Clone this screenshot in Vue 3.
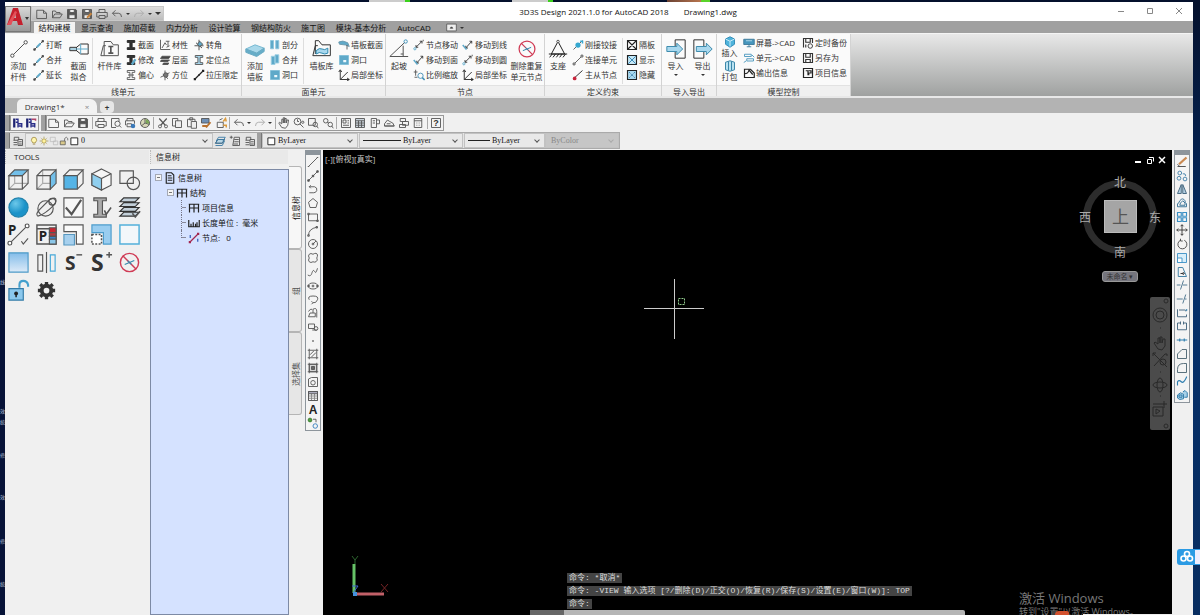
<script setup>
import { h } from 'vue'

const B = '#5fa9c9'
const L = '#a9d8ee'
const ibeam = '<path d="M3 2h10v2.5H9.500v7H13V14H3v-2.500h3.500v-7H3z" fill="#333" stroke="#222"/>'

const small = {
  new: '<path d="M1 3h9l4 4v7H1zM10 3v4h4"/>',
  open: '<path d="M2 13V4h4l1 2h5v2M2 13l3-5h10l-3 5z"/>',
  save: '<path d="M2 2h11l1 1v11H2z" fill="#555"/><path d="M5 2h6v4H5zM4 9h8v5H4z" fill="#eee"/>',
  saveas: '<path d="M2 2h12v12H2z" fill="#666"/><path d="M5 2h6v4H5zM4 9h8v5H4z" fill="#eee"/><path d="M8 13l6-6" stroke="#c8843c" stroke-width="2.500"/>',
  print: '<path d="M4 6V2h8v4M4 12H1V6h14v6h-3M4 10h8v4H4z"/>',
  undo: '<path d="M6 3L2 7l4 4M2 7h8q4 0 4 5"/>',
  redo: '<g stroke="#aaa"><path d="M10 3l4 4-4 4M14 7H6q-4 0-4 5"/></g>',
  preview: '<path d="M8 14H2V2h10v4"/><circle cx="10" cy="9" r="3.500"/><path d="M12.500 11.500L15 14"/>',
  plot: '<path d="M4 5V2h8v3M2 11V5h12v4M4 9h6v4H4z"/><circle cx="12" cy="12" r="3" fill="#3a78b8" stroke="none"/>',
  globe: '<circle cx="8" cy="8" r="6" fill="#d8d8b8"/><path d="M8 2v6l6 2M8 8l-5 4"/><path d="M9 3q5 1 4.500 6L9 8z" fill="#79a657" stroke="none"/>',
  cut: '<path d="M3 2l8 9M13 2L5 11" stroke-width="1.600"/><circle cx="4" cy="12.500" r="2"/><circle cx="12" cy="12.500" r="2"/>',
  copy: '<path d="M2 2h7v10H2z"/><path d="M6 5h8v9H6z" fill="#eee"/>',
  paste: '<path d="M2 3h10v10H2zM5 1h4v3H5z"/><path d="M7 6h7v9H7z" fill="#eee"/>',
  match: '<path d="M2 2h10v6H2z" fill="#6e8fb5"/><path d="M3 12h6M14 7l-6 7" stroke="#b8702c" stroke-width="2.500"/>',
  block: '<path d="M3 7h8v7H3zM6 4l4-2" /><path d="M11 6l3-4 1 4M11 11h4v3" stroke="#dc9b3c" stroke-width="2"/>',
  hand: '<path d="M5 14L1 8l1-1 3 2V3h2v5V1h2v7V2h2v6l1-4h2l-1 7-3 4z"/>',
  zoom: '<circle cx="6" cy="6" r="4.500"/><path d="M9 9l5 5M6 3v3h2"/><circle cx="13" cy="7" r="1.500"/>',
  zoomwin: '<path d="M2 2h9v9H2z"/><circle cx="11" cy="10" r="3"/><path d="M13 12l2 3"/>',
  zoomprev: '<circle cx="5" cy="5" r="3"/><circle cx="11" cy="10" r="3"/><path d="M13 12l2 3M7 7l2 1"/>',
  props: '<path d="M2 2h12v12H2zM4 4h4v4H4zM10 5h2M10 8h2M4 11h8"/>',
  grid: '<path d="M2 2h12v12H2z" fill="#ccd5dd"/><path d="M2 5h12M2 8h12M2 11h12M6 5v9M10 5v9"/>',
  palette: '<path d="M3 2h7v12H3zM10 4h4v5h-4M5 5h3M5 8h3"/>',
  sheet: '<path d="M2 12V9l4-5 3 2 4 2 2 4zM5 9h5M2 12h13"/>',
  sets: '<path d="M3 2h7v4H3zM6 6h8v5H6zM2 10h8v4H2z"/>',
  calc: '<path d="M3 2h10v12H3zM3 5h10M6 8h1M9 8h1M6 11h1M9 11h1"/>',
  help: '<path d="M2 2h12v12H2z"/><text x="8" y="12.500" font-size="12" font-weight="bold" font-family="Liberation Sans" text-anchor="middle" fill="#333" stroke="none">?</text>',
  ra: '<path d="M3 2v12" stroke="#1d2270" stroke-width="3"/><path d="M5 3h3v4H5M8 14V9h5v5M9 12h4" stroke="#2a2e88" stroke-width="1.800"/>',
  rb: '<path d="M3 2v12" stroke="#1d2270" stroke-width="3"/><path d="M5 3h3v4H5M8 14V9h5v5M9 12h4" stroke="#2a2e88" stroke-width="1.800"/><path d="M9 3h5v2" stroke="#b04468" stroke-width="2"/>',
  layers: '<path d="M2 7h6M2 10h5M2 13h5M3 7V3h6v3"/><path d="M8 6h6v8H8zM9 9h4M9 12h4" stroke="#555"/>',
  layers2: '<path d="M2 11l3-5h9l-3 5z" fill="#b8d6e6"/><path d="M2 11l3-5h9l-3 5zM3 8l3-5h9l-3 5M2 14h9l3-6" stroke="#3b7aa5"/>',
  layers3: '<path d="M7 3h7v11H5zM7 6h6M7 9h6M6 12h6M1 3h4M3 1v4"/>',
  bulb: '<path d="M6 11Q2 7 5 3q3-2 6 0 3 4-1 8zM6 13h4" fill="#fff6ae" stroke="#99833c"/>',
  sun: '<circle cx="8" cy="8" r="3.500" fill="#fff3a0" stroke="#a08d3c"/><path d="M8 1v2M8 13v2M1 8h2M13 8h2M3 3l1 1M12 12l1 1M3 13l1-1M12 4l1-1" stroke="#a08d3c"/>',
  vp: '<path d="M2 2h8v7H2zM7 8h7v6H7z" stroke="#bbb"/>',
  unlock: '<path d="M2 8h8v6H2z" fill="#d8c88a"/><path d="M9 8V4q3-4 5 0v3"/>',
  box: '<path d="M3 3h11v11H3z" fill="#fff" stroke="#222" stroke-width="1.500"/>',
  seg: '<path d="M3 13L13 3"/><path d="M1.500 12h2.500v2.500H1.500zM12 1.500h2.500V4H12z" fill="#fff"/>',
  segb: `<path d="M2 14L13 3" stroke="#444"/><path d="M5 11l5-5" stroke="${B}" stroke-width="2.500"/><path d="M12 2h2v2h-2zM1 13h2v2H1z" fill="#333"/>`,
  segk: '<path d="M2 14L14 2" stroke="#222" stroke-width="1.600"/><path d="M1 12h3v3H1zM12 1h3v3h-3zM7 7h2v2H7z" fill="#222" stroke="none"/>',
  segr: '<path d="M3 12L14 2" stroke="#222"/><circle cx="3.500" cy="12.500" r="2.500" fill="#c8243c" stroke="none"/>',
  beam: ibeam,
  beamb: ibeam + `<path d="M9 14l5-7" stroke="${B}" stroke-width="3"/>`,
  beamo: '<path d="M3 2h10v2.500H9.500v7H13V14H3v-2.500h3.500v-7H3z"/><path d="M4 8h8"/>',
  beaml: `<path d="M3 2h10v2.500H9.500v7H13V14H3v-2.500h3.500v-7H3z" fill="${L}"/>`,
  mat: '<path d="M2 1v13h13M4 12L8 5l2 3M9 3h5M12 3v7M10 11l4-2"/>',
  floor: '<path d="M4 3h11l-2 3H2zM3 8h11l-2 2H2zM6 12h7l-1 2H5z" fill="#444"/>',
  rot: `<path d="M8 1v14M2 9h12M4 5l8 7" stroke="#444"/><path d="M9 3l4 4-4 3-3-3z" fill="${B}"/>`,
  dir: '<path d="M8 2v13M2 11l12-6M5 7l7 6" /><circle cx="9" cy="8" r="3" fill="#777"/>',
  split: `<path d="M2 2h4v11H2zM9 2h4v11H9z" fill="${B}" stroke="#8dc5dc"/>`,
  merge: `<path d="M3 3h5v11H3zM8 1h5v11H8z" fill="${B}" stroke="#9ccfe3"/>`,
  hole: `<path d="M2 2h12v12H2z" fill="${B}" stroke="#82bed8"/><path d="M7 8h4v3H7z" fill="#eef8fc" stroke="none"/>`,
  slab: `<path d="M1 4q5-3 12 1l2 5-5-2-8-1z" fill="${B}" stroke="#6b97ab"/><path d="M12 8v6"/>`,
  axes: '<path d="M3 2v12h12M3 14L13 4M1 4l2-3 2 3M12 12l3 2-3 2" stroke="#222"/>',
  move: '<path d="M4 11L12 3M4 8v3h3M9 3h3v3" stroke="#333"/><circle cx="2.500" cy="13" r="1.500" stroke="#5fa9c9"/><path d="M13 2h1" stroke="#222" stroke-width="2"/>',
  moveb: '<path d="M5 12l8-9M5 9v3h3M10 3h3v3" stroke="#333"/><path d="M1 8l5 6" stroke="#5fa9c9" stroke-width="2"/>',
  scale: '<path d="M1 4h5M3.500 1v8M2 11h4"/><circle cx="10" cy="9" r="3.500" stroke="#438fb5"/><path d="M12.500 11.500l3 3" stroke="#438fb5" stroke-width="2"/>',
  hinge: `<path d="M2 14L14 2"/><circle cx="8" cy="8" r="3.500" fill="#35a8d0" stroke="none"/><path d="M11 3h3v3" stroke="#35a8d0" stroke-width="2"/>`,
  xboxw: '<path d="M2 2h12v12H2zM2 2l12 12M14 2L2 14" stroke="#222" stroke-width="1.500"/>',
  xboxb: `<path d="M2 2h12v12H2z" fill="#c5e8f7" stroke="#222" stroke-width="1.500"/><path d="M3 3l10 10M13 3L3 13" stroke="#2d7fb0"/>`,
  xboxd: `<path d="M2 2h12v12H2z" fill="${L}" stroke="#222" stroke-width="1.500"/><path d="M4 4l8 8M12 4l-8 8" stroke="#347ca7" stroke-dasharray="2 1"/>`,
  insert: `<path d="M2 4l6-3 6 3v7l-6 4-6-4z" fill="#4fb4dc" stroke="#2b88b4"/><path d="M2 4l6 3 6-3M8 7v7" stroke="#d5f0fa"/>`,
  pack: `<path d="M2 3l6-2 6 2v10l-6 2-6-2z" fill="#b9e1f0" stroke="#2b7ca0"/><path d="M6 2v12M10 2v12" stroke="#2b7ca0"/>`,
  screen: '<path d="M1 3h14v7H1z" fill="#4796bd" stroke="#3c7898"/><path d="M4 5h8" stroke="#b8ddeb"/><path d="M5 13h6M8 10v3" stroke="#3c7898"/>',
  unit: '<path d="M2 3h9v3H2zM5 9h9v3H5zM12 4l3 3M4 12l-3 2" stroke="#4796bd"/>',
  output: '<path d="M2 3h8l5 5v6H2zM2 9q5 0 6-5l5 6" stroke="#222" stroke-width="1.600"/>',
  disk: '<path d="M2 2h12v12H2zM5 2v5h6V2M5 14v-4h6v4" stroke="#333" stroke-width="1.500"/>',
  diskt: '<path d="M2 14V2h12v6M5 2v5h6V2M5 14v-4" stroke="#333" stroke-width="1.500"/><circle cx="11" cy="12" r="3" stroke="#333"/>',
  info: '<path d="M2 2h12v12H2zM5 5h3v6M9 5h3v3H9v3" stroke="#222" stroke-width="1.600"/>',
  doc: '<path d="M3 1h7l3 3v11H3zM5 5h5M5 8h6M5 11h6" stroke="#222" stroke-width="1.500"/>',
  frame: '<path d="M2 14V3h12v11M8 3v11M2 8h12M1 3h14" stroke="#222" stroke-width="1.600"/>',
  ruler: '<path d="M1 4v9h14V4M4 13V9M7 13V7M10 13V9M12 13V7" stroke="#222" stroke-width="1.600"/>',
  node: '<path d="M3 13L13 3" stroke="#a3264f" stroke-width="1.600"/><path d="M1 12h3v3H1zM12 1h3v3h-3z" fill="#a3264f" stroke="none"/><path d="M3 4v4M13 9v4" stroke="#335bb8" stroke-width="1.600"/>',
  line: '<path d="M2 14L14 2M1 14h2M13 2h2"/>',
  cline: '<path d="M2 14L14 2"/><path d="M1 13h2v2H1zM13 1h2v2h-2zM7 7h2v2H7z" fill="#555"/>',
  pline: '<path d="M3 5h7q4 1 3 5-1 3-4 3H3M5 3L3 5l2 2"/>',
  penta: '<path d="M8 2l6 5-2 7H4L2 7z"/>',
  rect: '<path d="M2 4h12v9H2zM1 3h2v2H1zM13 12h2v2h-2z"/>',
  arc: '<path d="M2 14q0-9 11-11M1 13h2v2H1zM12 2h2v2h-2z"/>',
  circle: '<circle cx="8" cy="8" r="6"/><path d="M8 8l4-4M7 7h2v2H7z"/>',
  cloud: '<path d="M8 3q5-3 6 1 0 2-1 4 2 3-1 5-2 1-4 0-3 2-5 0-2-2 0-5-2-3 0-5 2-2 5 0z"/>',
  spline: '<path d="M1 12q3 3 5-1c1-3 2-7 4-4s2 2 4-4"/>',
  ellipse: '<ellipse cx="8" cy="8" rx="6" ry="4"/><path d="M1 7h2v2H1zM13 7h2v2h-2zM7 7h2v2H7z"/>',
  earc: '<path d="M3 9Q0 4 8 4t6 5-6 4M6 11l2 2-2 2"/>',
  ins: '<path d="M4 8h7v5H2zM8 8V3q5-3 5 3v8M2 6q2-4 5-3"/>',
  mkb: '<path d="M2 4h8v6H2zM7 12h6"/><circle cx="12" cy="10" r="2.500"/>',
  dot: '<path d="M7 7h2v2H7z" fill="#555" stroke="none"/>',
  hatch: '<path d="M3 3h10v10H3zM1 3h2M13 3h2M3 1v2M13 1v2M1 13h2M13 13h2M3 13v2M13 13v2M4 9l5-5M6 12l6-6"/>',
  grad: '<path d="M3 3h10v10H3z" fill="#d5d5d5"/><path d="M6 6h4v4H6z" fill="#666"/><path d="M1 3h14M1 13h14M3 1v14M13 1v14"/>',
  region: '<path d="M2 4l4-2h8v12H2z"/><circle cx="8" cy="9" r="3"/>',
  table: '<path d="M2 2h12v12H2zM2 8h12M2 11h12M6 5v9M10 5v9" stroke="#888"/><path d="M2 2h12v12H2z"/><path d="M2 2h12v3H2z" fill="#aab"/>',
  text: '<text x="8" y="14" font-size="16" font-weight="bold" font-family="Liberation Sans" text-anchor="middle" fill="#222" stroke="none">A</text>',
  addsel: '<circle cx="4" cy="4" r="2.500" fill="#519e42" stroke="#387d2d"/><circle cx="11" cy="12" r="3" stroke="#347fbd"/><path d="M8 3h4v4" />',
  erase: '<path d="M4 11L14 2" stroke="#c98952" stroke-width="3"/><path d="M2 14h11M2 11l3 3" stroke="#444"/>',
  mcopy: '<g stroke="#3f7fa8"><circle cx="5" cy="4" r="2.500"/><circle cx="4" cy="11" r="2.500"/><circle cx="12" cy="12" r="2.500"/><path d="M9 5q4-1 4 3"/></g>',
  mirror: '<path d="M7 2v12H2zM9 2v12h5z" fill="#b5d0e2" stroke="#3a5f78"/>',
  offset: '<path d="M2 13h12V9q-2-1-2-4-3-5-7 0-2 5-3 4zM5 11h7V8L9 5 6 8z" stroke="#2f6b92"/>',
  array: '<path d="M2 2h5v5H2zM9 2h5v5H9zM2 9h5v5H2zM9 9h5v5H9z" stroke="#3a8fc4" stroke-width="1.500"/>',
  mv: '<path d="M8 1v14M1 8h14M6 3l2-2 2 2M6 13l2 2 2-2M3 6L1 8l2 2M13 6l2 2-2 2" stroke="#333"/>',
  rotate: '<path d="M6 3a6 6 0 1 0 5 0M6 1v3h3" stroke="#444"/>',
  scl: '<path d="M2 2h12v12H2z" fill="#d8eefa" stroke="#3a8fc4"/><path d="M2 8h6v6H2z" fill="#fff" stroke="#3a8fc4"/>',
  stretch: '<path d="M3 14V2h6l5 12z" stroke="#33779f"/><path d="M6 10h4M9 8l2 2-2 2" stroke="#222"/>',
  trim: '<path d="M1 8h5M9 8h6M10 2L6 14" stroke="#456f8a"/>',
  extend: '<path d="M1 8h8M13 2L9 14M12 8h2" stroke="#456f8a"/>',
  brk: '<path d="M12 5h2M4 4h8M2 3v10h12v-3" stroke="#3c5f78"/><path d="M13 3h2v2h-2z" fill="#2d7dae" stroke="none"/>',
  brk2: '<path d="M6 4H2v9h12V4h-4M6 2v4M10 2v4" stroke="#3c5f78"/>',
  join: '<path d="M1 8h14M5 6v4M11 6v4" stroke="#2d7dae" stroke-width="1.500"/>',
  chamfer: '<path d="M2 14V8l6-6h6v12z" stroke="#48626f"/>',
  fillet: '<path d="M2 14v-4q0-8 8-8h4v12z" stroke="#48626f"/>',
  blend: '<path d="M2 14V9q2-3 5 0t7-6V2" stroke="#2d7dae" stroke-width="1.500"/>',
  explode: '<path d="M2 8l4-3 4 2v6l-5 1-3-2zM9 4l3-2 3 3v6h-4M4 8h4v3H4z" fill="#a6d0e8" stroke="#2976a5"/>',
  toggle: '<path d="M1 3h14v10H1z" fill="#eee" stroke="#555"/><path d="M6 9l2-2 2 2z" fill="#333"/>'
}

const large = {
  node2: '<path d="M4 20L20 4"/><circle cx="4" cy="20" r="2" fill="#fff"/><circle cx="20" cy="4" r="2" fill="#fff"/>',
  fit: `<path d="M1 10h8v4H1zM9 10l5-4h9v12h-9l-5-4z" stroke="#333"/><path d="M14 6v12M1 12h22" stroke="${B}"/>`,
  lib: '<path d="M5 20V3h8l3 4h6v13H1L4 8h3"/><path d="M10 9h6M10 17h6M13 9v8" stroke-width="2"/>',
  slab2: '<path d="M1 12l11-5 11 4-9 6z" fill="#a9d8ea" stroke="#78b9d2"/><path d="M1 12v4l13 5 9-6v-4l-9 6z" fill="#66adc8" stroke="#6aaac3"/>',
  wall: `<path d="M4 18V2h4l4 5h10v13H1l3-12h3" stroke="#333"/><path d="M5 14q4-4 7-2t7-1v6q-4 2-7 0t-7 1z" fill="${L}" stroke="#308ab0"/>`,
  slope: '<path d="M1 21h22M1 21L19 4M17 8v13M14 18h3"/><circle cx="20" cy="3" r="2" stroke="#4796bd"/>',
  noentry: '<circle cx="12" cy="12" r="9.500" stroke="#d03b55" stroke-width="1.500"/><path d="M5 5l14 14" stroke="#d03b55" stroke-width="1.500"/><path d="M7 14l10-4M10 10l4 4" stroke="#3489ad"/>',
  support: '<path d="M12 3l8 15H4z" stroke="#222"/><path d="M1 18h22M2 22l3-4M6 22l3-4M10 22l3-4M14 22l3-4M18 22l3-4" stroke="#222"/><circle cx="12" cy="3" r="1.500" fill="#fff"/>',
  import: `<path d="M11 1h12v22H11V1" stroke="#333"/><path d="M1 9h12V5l7 7-7 7v-4H1z" fill="${L}" stroke="#3e8cae"/>`,
  export: `<path d="M13 1H1v22h12V1" stroke="#333"/><path d="M4 9h12V5l7 7-7 7v-4H4z" fill="${L}" stroke="#3e8cae"/>`,
  cubeTop: '<path d="M8 2v14h14M8 16l-6 6" stroke="#aaa"/><path d="M2 8l6-6h14l-6 6z" fill="#73c0ea"/><path d="M2 8h14v14H2zM22 2v14l-6 6"/>',
  cubeRight: '<path d="M8 2v14h14M8 16l-6 6" stroke="#aaa"/><path d="M22 2v14l-6 6V8z" fill="#73c0ea"/><path d="M2 8h14v14H2zM2 8l6-6h14"/>',
  cubeFront: '<path d="M2 8l6-6h14l-6 6zM22 2v14l-6 6"/><path d="M2 8h14v14H2z" fill="#55b4e6"/>',
  cubeIso: '<path d="M12 1l10 5v12l-10 5-10-5V6z" fill="#f6f6f6"/><path d="M2 6l10 5v12L2 18z" fill="#8fcfef"/><path d="M12 11l10-5"/>',
  bool: '<path d="M2 3h14v13H2z"/><circle cx="16" cy="16" r="6.500"/>',
  sphere: '<defs><radialGradient id="sph" cx="35%" cy="30%"><stop offset="0" stop-color="#6cc8ea"/><stop offset="1" stop-color="#1b93c9"/></radialGradient></defs><circle cx="12" cy="12" r="10" fill="url(#sph)" stroke="#2283ad"/>',
  orbit: '<circle cx="11" cy="13" r="8"/><path d="M3 21q-3-2 2-7T15 4q7-4 7 1 0 3-7 9T3 21z"/><circle cx="18" cy="6" r="3.500"/>',
  check: '<path d="M2 2h20v20H2z" fill="#f7f7f7"/><path d="M4 12l6 7L20 4" stroke-width="2.200"/>',
  ibeam: '<path d="M4 2h13v3h-4v14h4v3H4v-3h4V5H4z" fill="#aaa"/><path d="M15 15l2 4 5-7" stroke-width="1.600"/>',
  stack: '<path d="M6 2h16l-4 4H2zM6 7h16l-4 4H2zM6 12h16l-4 4H2zM6 17h16l-4 4H2z" fill="#c3d0da" stroke="#333"/><path d="M15 18l3 4 5-6" stroke-width="1.600"/>',
  pline: '<text x="1" y="12" font-size="14" font-weight="bold" font-family="Noto Sans" fill="#222" stroke="none">P</text><path d="M3 21L20 4M15 19l2 3 5-6"/><circle cx="3" cy="21" r="2" fill="#fff"/><circle cx="21" cy="3" r="2" fill="#fff"/>',
  pblock: '<path d="M2 2h20v20H2zM2 6h20" stroke-width="1.500"/><text x="4" y="19" font-size="14" font-weight="bold" font-family="Noto Sans" fill="#222" stroke="none">P</text><path d="M15 5h7v5h-7z" fill="#ca2430"/><path d="M15 10h7v4h-7z" fill="#b43b40"/><path d="M15 14h7v3h-7z" fill="#3584ca"/><path d="M15 17h7v5h-7z" fill="#8ac6e8"/>',
  offs: '<path d="M2 2h20v20h-7V9H2z" fill="#fafafa"/><path d="M2 12h11v11H2z" fill="#a6d0ee" stroke="#5797bf"/>',
  offs2: '<path d="M2 2h20v20h-8V10H2z" fill="#99cdf0" stroke="#4b9ccc"/><path d="M2 12h10v10H2z" stroke-dasharray="2 1.500" stroke-width="1.600" fill="#fff"/>',
  rectb: '<path d="M2 2h20v20H2z" fill="#f3f7fa" stroke="#53b0da" stroke-width="1.500"/>',
  rectf: '<defs><linearGradient id="rf" x2="0" y2="1"><stop offset="0" stop-color="#84bde9"/><stop offset="1" stop-color="#dceaf8"/></linearGradient></defs><path d="M2 2h20v20H2z" fill="url(#rf)" stroke="#4d9ac8"/>',
  mirror2: '<path d="M3 4h5v17H3z"/><path d="M12 1v22"/><path d="M16 4h5v17h-5z" stroke="#45a8d8"/>',
  sminus: '<text x="3" y="20" font-size="20" font-weight="bold" font-family="Noto Sans" fill="#333" stroke="none">S</text><path d="M15 4h6" stroke-width="1.500"/>',
  splus: '<text x="1" y="21" font-size="24" font-weight="bold" font-family="Noto Sans" fill="#333" stroke="none">S</text><path d="M17 4h6M20 1v6" stroke-width="1.500"/>',
  lock: '<path d="M2 10h15v12H2z" fill="#8bc8ed" stroke="#347ca8"/><path d="M13 9V6q0-4 4-4t5 4v2" stroke="#45a0cd" stroke-width="2.200"/><circle cx="9.500" cy="15" r="2" fill="#222" stroke="none"/><path d="M9.500 15v4" stroke="#222" stroke-width="1.600"/>',
  gear: '<circle cx="12" cy="12" r="5" stroke="#333" stroke-width="4"/><path d="M12 3v3M12 18v3M3 12h3M18 12h3M5.500 5.500l2 2M16.500 16.500l2 2M5.500 18.500l2-2M16.500 7.500l2-2" stroke="#333" stroke-width="3.500"/>'
}

const Icon = (p) =>
  h('svg', {
    width: p.size,
    height: p.size,
    viewBox: p.big ? '0 0 24 24' : '0 0 16 16',
    fill: 'none',
    stroke: '#555',
    'stroke-width': 1.2,
    'aria-hidden': 'true',
    innerHTML: p.big ? large[p.name] : small[p.name]
  })
Icon.props = { name: String, size: { type: Number, default: 12 }, big: Boolean }

const quick = ['new', 'open', 'save', 'saveas', 'print', 'undo', '', 'redo', '']
const menus = [
  { t: '结构建模', w: 41 }, { t: '显示查询', w: 44 }, { t: '施加荷载', w: 41 }, { t: '内力分析', w: 44 },
  { t: '设计验算', w: 41 }, { t: '钢结构防火', w: 52 }, { t: '施工图', w: 32 }, { t: '模块-基本分析', w: 64 }, { t: 'AutoCAD', w: 42 }
]

const big = (w, icon, ...text) => ({ kind: 'big', w, icon, text })
const drop = (w, icon, ...text) => ({ kind: 'big', w, icon, text, arrow: true })
const col = (w, ...rows) => ({ kind: 'col', w, rows })
const sep = { kind: 'sep', w: 3 }

const groups = [
  { t: '线单元', w: 237, items: [
    big(27, 'node2', '添加', '杆件'),
    col(34, ['segb', '打断'], ['segb', '合并'], ['segb', '延长']),
    big(25, 'fit', '截面', '拟合'), sep,
    big(29, 'lib', '杆件库'),
    col(34, ['beam', '截面'], ['beamb', '修改'], ['beamo', '偏心']),
    col(34, ['mat', '材性'], ['floor', '层面'], ['dir', '方位']),
    col(49, ['rot', '转角'], ['beaml', '定位点'], ['segk', '拉压限定'])] },
  { t: '面单元', w: 144, items: [
    big(26, 'slab2', '添加', '墙板'),
    col(34, ['split', '剖分'], ['merge', '合并'], ['hole', '洞口']), sep,
    big(31, 'wall', '墙板库'),
    col(49, ['slab', '墙板截面'], ['hole', '洞口'], ['axes', '局部坐标'])] },
  { t: '节点', w: 159, items: [
    big(26, 'slope', '起坡'),
    col(49, ['move', '节点移动'], ['moveb', '移动到面'], ['scale', '比例缩放']),
    col(47, ['moveb', '移动到线'], ['move', '移动到圆'], ['axes', '局部坐标']),
    big(37, 'noentry', '删除重复', '单元节点')] },
  { t: '定义约束', w: 117, items: [
    big(26, 'support', '支座'),
    col(50, ['hinge', '刚接铰接'], ['seg', '连接单元'], ['segr', '主从节点']), sep,
    col(35, ['xboxw', '隔板'], ['xboxb', '显示'], ['xboxd', '隐藏'])] },
  { t: '导入导出', w: 55, items: [drop(27, 'import', '导入'), drop(27, 'export', '导出')] },
  { t: '模型控制', w: 134, items: [
    { kind: 'pair', w: 25, rows: [['insert', '插入'], ['pack', '打包']] },
    col(59, ['screen', '屏幕->CAD'], ['unit', '单元->CAD'], ['output', '输出信息']),
    col(49, ['diskt', '定时备份'], ['disk', '另存为'], ['info', '项目信息'])] }
]

const standard = ['new', 'open', 'save', '|', 'print', 'preview', 'plot', 'globe', '|', 'cut', 'copy', 'paste', 'match', 'block', '|',
  'undo', '', 'redo', '', '|', 'hand', 'zoom', 'zoomwin', 'zoomprev', '|', 'props', 'grid', 'palette', 'sheet', 'sets', 'calc', '|', 'help']
const tools = ['cubeTop', 'cubeRight', 'cubeFront', 'cubeIso', 'bool', 'sphere', 'orbit', 'check', 'ibeam', 'stack', 'pline', 'pblock',
  'offs', 'offs2', 'rectb', 'rectf', 'mirror2', 'sminus', 'splus', 'noentry', 'lock', 'gear']
const draw = ['line', 'cline', 'pline', 'penta', 'rect', 'arc', 'circle', 'cloud', 'spline', 'ellipse', 'earc', 'ins', 'mkb', 'dot', 'hatch', 'grad', 'region', 'table', 'text', 'addsel']
const modify = ['erase', 'mcopy', 'mirror', 'offset', 'array', 'mv', 'rotate', 'scl', 'stretch', 'trim', 'extend', 'brk', 'brk2', 'join', 'chamfer', 'fillet', 'blend', 'explode']
const tree = [
  { d: 0, i: 'doc', t: '信息树', box: true }, { d: 1, i: 'frame', t: '结构', box: true },
  { d: 2, i: 'frame', t: '项目信息' }, { d: 2, i: 'ruler', t: '长度单位 :  毫米' }, { d: 2, i: 'node', t: '节点:   0' }
]
const log = ['命令: *取消*', '命令: -VIEW 输入选项 [?/删除(D)/正交(O)/恢复(R)/保存(S)/设置(E)/窗口(W)]: TOP', '命令:']
</script>

<template>
  <div class="desktop">
    <div class="behind" aria-hidden="true">
      <i class="blob b1"></i><i class="blob b2"></i><i class="photo"></i>
      <span class="bit p1">线</span><span class="bit p2">效</span><span class="bit p3">统</span><span class="bit p4">修</span><span class="bit p5">效</span><span class="bit p6">修</span><span class="bit p7">统</span>
    </div>
    <div class="window">
      <header class="top">
        <button class="logo" aria-label="应用程序菜单">
          <svg width="26" height="26" viewBox="0 0 26 26" aria-hidden="true">
            <path d="M2 19L8 2h5l5 17h-5l-1-4H7l-1 4zM8 12h3L10 6z" fill="#c41f2d" fill-rule="evenodd" />
            <path d="M2 19l8-14 2 1-6 13z" fill="#e4505a" /><path d="M20 11h4l-2 3z" fill="#333" />
          </svg>
        </button>
        <div class="quick">
          <template v-for="(q, i) in quick" :key="i">
            <button v-if="q" :aria-label="q"><Icon :name="q" /></button><i v-else class="caret"></i>
          </template>
          <i class="caret wide"></i>
        </div>
        <h1><span>3D3S Design 2021.1.0 for AutoCAD 2018</span><span>Drawing1.dwg</span></h1>
        <div class="controls">
          <button aria-label="最小化"><svg width="8" height="8"><path d="M1 4.500h6" stroke="#888" /></svg></button>
          <button aria-label="最大化"><svg width="8" height="8"><path d="M1.500 1.500h5v5h-5z" stroke="#888" fill="none" /></svg></button>
          <button aria-label="关闭"><svg width="8" height="8"><path d="M1 1l6 6M7 1L1 7" stroke="#888" /></svg></button>
        </div>
      </header>
      <nav class="menus">
        <button v-for="(m, i) in menus" :key="m.t" :class="{ on: i === 0 }" :style="{ width: m.w + 'px' }">{{ m.t }}</button>
        <button class="toggle" aria-label="最小化功能区"><Icon name="toggle" :size="11" /><i class="caret"></i></button>
      </nav>
      <section class="ribbon">
        <div v-for="g in groups" :key="g.t" class="group" :style="{ width: g.w + 'px' }">
          <div class="items">
            <div v-for="(it, i) in g.items" :key="i" :class="it.kind" :style="{ width: it.w + 'px' }">
              <button v-if="it.kind === 'big'" class="bigbtn">
                <Icon :name="it.icon" big :size="20" />
                <span v-for="t in it.text" :key="t">{{ t }}</span>
                <i v-if="it.arrow" class="caret"></i>
              </button>
              <template v-else-if="it.kind !== 'sep'">
                <button v-for="r in it.rows" :key="r[1]"><Icon :name="r[0]" /><span>{{ r[1] }}</span></button>
              </template>
            </div>
          </div>
          <div class="caption">{{ g.t }}</div>
        </div>
      </section>
      <div class="files">
        <button class="file">Drawing1*<span>×</span></button>
        <button class="plus" aria-label="新图形">+</button>
      </div>
      <div class="bars">
        <div class="bar">
          <i class="grip"></i>
          <div class="set ratio"><button aria-label="Ra"><Icon name="ra" /></button><button aria-label="Rb"><Icon name="rb" /></button></div>
          <i class="grip"></i>
          <div class="set std">
            <template v-for="(s, i) in standard" :key="i">
              <i v-if="s === '|'" class="vline"></i><i v-else-if="!s" class="caret"></i>
              <button v-else :aria-label="s"><Icon :name="s" /></button>
            </template>
          </div>
        </div>
        <div class="bar second">
          <i class="grip"></i>
          <button class="lead" aria-label="图层特性"><Icon name="layers" /></button>
          <div class="field layer">
            <Icon v-for="n in ['bulb', 'sun', 'vp', 'unlock', 'box']" :key="n" :name="n" :size="10" />
            <select aria-label="图层"><option>0</option></select><i class="chev"></i>
          </div>
          <div class="after"><button v-for="n in ['layers2', 'layers3', 'layers']" :key="n" :aria-label="n"><Icon :name="n" /></button></div>
          <i class="grip"></i>
          <div class="field color"><Icon name="box" :size="10" /><select aria-label="颜色"><option>ByLayer</option></select><i class="chev"></i></div>
          <div class="field ltype"><i class="rule"></i><select aria-label="线型"><option>ByLayer</option></select><i class="chev"></i></div>
          <div class="field lweight"><i class="rule"></i><select aria-label="线宽"><option>ByLayer</option></select><i class="chev"></i></div>
          <div class="field plot"><select aria-label="打印样式" disabled><option>ByColor</option></select><i class="chev"></i></div>
        </div>
      </div>
      <main>
        <aside class="tools">
          <h2>TOOLS</h2>
          <div class="toolgrid"><button v-for="t in tools" :key="t" :aria-label="t"><Icon :name="t" big :size="23" /></button></div>
        </aside>
        <aside class="info">
          <h2>信息树</h2>
          <div class="inforow">
            <ul class="tree">
              <li v-for="n in tree" :key="n.t" :class="'d' + n.d">
                <i v-if="n.box" class="expander"></i><i v-else class="branch"></i>
                <Icon :name="n.i" /><span>{{ n.t }}</span>
              </li>
            </ul>
            <div class="sidetabs">
              <button class="on"><span>信息树</span></button><button><span>组</span></button><button><span>选择集</span></button>
            </div>
          </div>
        </aside>
        <div class="strip draw"><i class="head"></i><button v-for="d in draw" :key="d" :aria-label="d"><Icon :name="d" /></button></div>
        <section class="canvas">
          <div class="view">[-][俯视][真实]</div>
          <div class="mdi">
            <button aria-label="最小化"><svg width="8" height="8"><path d="M1 6h6" stroke="#fff" stroke-width="2" /></svg></button>
            <button aria-label="还原"><svg width="8" height="8"><path d="M1.500 3.500h4v4h-4zM3 1.500h4.500v4" stroke="#fff" fill="none" /></svg></button>
            <button aria-label="关闭"><svg width="8" height="8"><path d="M1 1l6 6M7 1L1 7" stroke="#fff" stroke-width="1.500" /></svg></button>
          </div>
          <svg class="cross" width="62" height="62" aria-hidden="true">
            <path d="M31.500 1v60M1 30.500h60" stroke="#ccc" /><path d="M35.500 20.500h6v6h-6z" stroke="#8fc98a" fill="none" stroke-dasharray="2 1" />
          </svg>
          <div class="cube">
            <i class="ring"></i><b class="n">北</b><b class="w">西</b><b class="e">东</b><b class="s">南</b>
            <button class="face">上</button>
          </div>
          <button class="ucsname">未命名 ▾</button>
          <svg class="nav" width="20" height="133" fill="none" stroke="#292929" aria-hidden="true">
            <rect width="20" height="133" rx="2" fill="#4b4b4b" stroke="none" />
            <circle cx="16" cy="4" r="2" /><circle cx="10" cy="18" r="7" /><circle cx="10" cy="18" r="4" /><path d="M10 31h1" />
            <path d="M8 52l-4-6 1-1 3 2v-6h2v5-6h2v6l1-4h2v7l-3 4z" /><circle cx="13" cy="65" r="3" /><path d="M3 56l14 14M15 57L4 69M3 59v-3h3M15 57h2v2M10 75h1" />
            <ellipse cx="10" cy="88" rx="7" ry="3" /><ellipse cx="10" cy="88" rx="3" ry="7" /><path d="M10 99h1M3 107h14M3 110h10v9H3zM6 112l4 2-4 3zM14 104v7" /><circle cx="16" cy="129" r="2" />
          </svg>
          <svg class="ucs" width="44" height="44" aria-hidden="true" fill="none">
            <path d="M5 38V9" stroke="#66c267" stroke-width="3" /><path d="M6 39h29" stroke="#c16068" stroke-width="3" />
            <path d="M3 1l3 4 3-4M6 5v4" stroke="#2c632e" /><path d="M32 29l7 8M39 29l-7 8" stroke="#752426" /><path d="M3 31h6l-5 7" stroke="#3d67ce" /><path d="M4 37h4v4H4z" fill="#4592de" />
          </svg>
          <div class="log"><p v-for="(l, i) in log" :key="i"><span>{{ l }}</span></p></div>
          <div class="cmd"><i></i></div>
          <div class="mark"><p>激活 Windows</p><small>转到"设置"以激活 Windows。</small></div>
          <i class="flame"></i><i class="paper"></i>
        </section>
        <div class="strip modify"><i class="head"></i><button v-for="m in modify" :key="m" :aria-label="m"><Icon :name="m" /></button></div>
      </main>
    </div>
    <button class="share" aria-label="网盘">
      <svg width="16" height="16" fill="none" stroke="#fff" stroke-width="1.600" aria-hidden="true"><circle cx="9" cy="5" r="2.500" /><circle cx="5.500" cy="9.500" r="2.500" /><circle cx="12" cy="9.500" r="2.500" /></svg><i></i>
    </button>
  </div>
</template>

<style>
body { overflow: hidden; }
</style>

<style scoped>
* { box-sizing: border-box; }
.desktop {
  position: relative; height: 100vh; padding: 2px 7px 0 5px; overflow: hidden;
  background: linear-gradient(#04102c, #06306a 45%, #082d60); color: #333;
  font: 8px/11px "Open Sans", "Noto Sans CJK SC", sans-serif;
}
button { padding: 0; border: 0; background: none; font: inherit; color: inherit; display: flex; align-items: center; justify-content: center; white-space: nowrap; }
svg { display: block; flex: none; }
h1, h2, p, ul { margin: 0; padding: 0; font: inherit; }
.behind { position: absolute; inset: 0; background: linear-gradient(90deg, #071338 0 5px, transparent 5px); }
.blob { position: absolute; top: 0; width: 41px; height: 2px; background: #ccc; border-right: 5px solid #3bd11c; }
.b1 { left: 369px; }
.b2 { left: 512px; }
.photo { position: absolute; top: 0; left: 667px; width: 43px; height: 2px; background: linear-gradient(90deg, #6a4133, #b9764f 80%, #5ad32a 80%); }
.bit { position: absolute; left: 0; color: #b8c4d8; font-size: 5px; }
.p1 { top: 277px; } .p2 { top: 406px; } .p3 { top: 417px; } .p4 { top: 450px; } .p5 { top: 492px; } .p6 { top: 536px; } .p7 { top: 579px; }
.window { position: relative; height: 100%; display: flex; flex-direction: column; background: #f0f0f0; }
.top { height: 19px; flex: none; display: flex; align-items: flex-start; background: #fff; }
.logo { position: relative; z-index: 2; width: 26px; height: 26px; margin-top: 4px; flex: none; background: linear-gradient(#d8d8d8, #999); border: 1px solid #777; }
.quick { width: 133px; height: 15px; margin-top: 4px; flex: none; display: flex; align-items: center; justify-content: space-between; padding: 0 2px 0 4px; background: linear-gradient(#ddd, #bdbdbd); border: 1px solid #c8c8c8; }
.caret { border: 2px solid transparent; border-top-color: #333; border-bottom: 0; width: 4px; height: 2px; flex: none; }
.caret.wide { border-width: 3px; border-bottom: 0; width: 6px; height: 4px; }
h1 { flex: 1; display: flex; justify-content: center; gap: 15px; padding: 4px 15px 0 0; color: #111; white-space: nowrap; }
.controls { display: flex; width: 86px; height: 18px; }
.controls button { flex: 1; }
.menus { display: flex; flex: none; height: 12px; padding: 1px 0 0 29px; background: #a0a0a0; color: #111; }
.menus button { height: 11px; flex: none; }
.menus .on { background: #f2f2f2; }
.toggle { gap: 3px; padding-left: 11px; }
.ribbon { display: flex; flex: none; height: 65px; border-top: 1px solid #f4f4f4; border-bottom: 2px solid #e8e8e8; background: linear-gradient(#e8e8e8, #9fa1a0); }
.group { display: flex; flex-direction: column; flex: none; background: #fafafa; border-right: 1px solid #d3d3d3; }
.items { flex: 1; display: flex; padding-top: 3px; }
.group:last-child .items { padding-top: 1px; }
.caption { height: 11px; line-height: 11px; text-align: center; background: #f0f0f0; border-top: 1px solid #e2e2e2; }
.big, .pair, .col, .sep { flex: none; white-space: nowrap; }
.bigbtn { flex-direction: column; width: 100%; padding-top: 2px; }
.bigbtn svg { margin-bottom: 1px; }
.bigbtn .caret { margin-top: 3px; }
.col button { height: 15px; gap: 1px; padding-left: 1px; }
.sep { border-left: 1px solid #ddd; margin: 1px 0 1px 1px; }
.pair button { flex-direction: column; width: 100%; height: 24px; line-height: 10px; }
.files { display: flex; flex: none; height: 15px; padding-left: 12px; align-items: flex-end; background: #b3b3b3; }
.file { width: 80px; height: 14px; gap: 20px; background: #f2f2f2; border-radius: 5px 7px 0 0; }
.file span { color: #888; }
.plus { width: 14px; height: 12px; margin-left: 3px; background: #e6e6e6; border-radius: 4px; font-weight: bold; }
.bars { flex: none; height: 37px; padding-top: 2px; }
.bar { display: flex; height: 16px; }
.second { height: 17px; margin-top: 1px; width: 615px; background: #e4e4e4; border: 1px solid #aaa; border-left: 0; }
.grip { width: 5px; flex: none; background: #a0a0a0; border-right: 1px solid #777; }
.set { display: flex; align-items: center; border: 1px solid #999; background: #f3f3f3; }
.ratio { width: 29px; margin: 0 2px 0 0; justify-content: space-around; }
.std { width: 398px; justify-content: space-between; padding: 0 1px; }
.vline { width: 1px; height: 12px; background: #aaa; }
.lead { width: 15px; }
.field { display: flex; align-items: center; border: 1px solid #c2c2c2; background: #e9e9e9; padding: 0 3px; min-width: 0; }
.field select { appearance: none; flex: 1; min-width: 0; width: 0; height: 13px; border: 0; padding: 0 2px; background: none; color: #111; font: 8px/12px "Liberation Serif", serif; opacity: 1; }
.chev { width: 4px; height: 4px; border: solid #555; border-width: 0 1px 1px 0; transform: rotate(45deg); margin: 0 2px 2px 0; flex: none; }
.layer { width: 188px; }
.after { width: 44px; display: flex; justify-content: space-around; }
.color { width: 96px; }
.ltype { width: 104px; margin-left: 1px; }
.ltype .rule { width: 38px; height: 1px; background: #222; }
.lweight { width: 81px; margin-left: 1px; }
.lweight .rule { width: 22px; height: 1px; background: #222; }
.plot { flex: 1; background: #c6c6c6; }
.plot select { color: #888; }
.plot .chev { border-color: #aaa; }
main { flex: 1; min-height: 0; display: flex; }
h2 { height: 14px; padding: 1px 0 0 8px; background: #e9e9e9; border-left: 1px dotted #bbb; color: #222; }
.tools { width: 144px; flex: none; }
.toolgrid { display: grid; grid-template: repeat(5, 1fr) / repeat(5, 1fr); width: 138px; height: 140px; padding-top: 2px; }
.info { width: 154px; flex: none; display: flex; flex-direction: column; padding-left: 1px; }
.info h2 { width: 138px; padding-left: 5px; }
.inforow { flex: 1; display: flex; }
.tree { width: 139px; margin-top: 5px; list-style: none; background: #d5e2ff; border: 1px solid #7d8aa5; color: #111; }
.tree li { display: flex; align-items: center; height: 15px; gap: 2px; padding-left: 4px; white-space: pre; }
.tree .d1 { padding-left: 16px; }
.tree .d2 { padding-left: 30px; }
.expander { width: 7px; height: 7px; border: 1px solid #a4a9b5; background: linear-gradient(#777, #777) center / 3px 1px no-repeat #f5f5f5; }
.branch { width: 5px; height: 15px; border-left: 1px dotted #778; background: linear-gradient(#889, #889) center / 100% 1px no-repeat; }
li:last-child .branch { height: 8px; margin-bottom: 7px; background-position: bottom; }
.sidetabs { width: 14px; padding-top: 2px; }
.sidetabs button { width: 13px; height: 83px; border: 1px solid #b5b5b5; border-left: 0; border-radius: 0 3px 3px 0; background: #e6e6e6; color: #555; }
.sidetabs .on { background: #f7f7f7; color: #111; }
.sidetabs span { writing-mode: vertical-rl; text-orientation: sideways; transform: rotate(180deg); }
.strip { width: 16px; flex: none; display: flex; flex-direction: column; border: 1px solid #8d959c; background: #f4f4f4; align-self: flex-start; }
.strip .head { height: 4px; background: #8d959c; flex: none; }
.strip button { flex: 1; min-height: 0; }
.draw { height: 281px; margin: 0 2px; }
.modify { height: 253px; margin: 0 3px; }
.canvas { position: relative; flex: 1; margin-right: -1px; background: #000; color: #ccc; overflow: hidden; }
.view { position: absolute; left: 2px; top: 3px; }
.mdi { position: absolute; right: 6px; top: 6px; display: flex; gap: 4px; }
.cross { position: absolute; left: 320px; top: 128px; }
.cube { position: absolute; right: 11px; top: 26px; width: 82px; height: 82px; }
.cube .ring { position: absolute; inset: 4px; border: 7px solid #2c2c2c; border-radius: 50%; }
.cube b { position: absolute; font: 12px/14px "Noto Sans CJK SC", sans-serif; color: #aaa; }
.n { left: 35px; top: -1px; } .s { left: 35px; top: 69px; } .w { left: 0; top: 34px; } .e { right: 0; top: 34px; }
.face { position: absolute; left: 25px; top: 24px; width: 33px; height: 33px; background: #a5a5a5; border: 1px solid #bbb; color: #555; font-size: 17px; }
.ucsname { position: absolute; right: 34px; top: 121px; width: 36px; height: 11px; border: 1px solid #999; border-radius: 3px; background: #75757d; color: #333; font-size: 7px; }
.nav { position: absolute; right: 2px; top: 147px; }
.ucs { position: absolute; left: 26px; bottom: 16px; }
.log { position: absolute; left: 244px; bottom: 6px; font: 8px/10px "Liberation Mono", "Noto Sans CJK SC", monospace; white-space: nowrap; color: #ddd; }
.log p { height: 10px; margin-bottom: 3px; }
.log p:last-child { margin-bottom: 0; }
.log span { display: block; width: max-content; height: 10px; padding: 0 2px; background: #444; }
.cmd { position: absolute; left: 207px; bottom: 0; width: 435px; height: 5px; background: #b5b5b5; border-radius: 2px 2px 0 0; }
.cmd i { display: block; width: 34px; height: 5px; background: #666; }
.mark { position: absolute; right: 0; bottom: -3px; width: 153px; color: #777; white-space: nowrap; }
.mark p { font-size: 13px; line-height: 15px; }
.mark small { font-size: 9px; line-height: 12px; display: block; }
.flame { position: absolute; right: 103px; bottom: 0; width: 14px; height: 4px; background: #d2512e; border-radius: 8px 4px 0 0; }
.paper { position: absolute; right: 0; bottom: 0; width: 89px; height: 1px; background: #eee; }
.share { position: absolute; right: 0; top: 549px; width: 23px; height: 16px; background: #2b9be4; border-radius: 3px 0 0 3px; justify-content: flex-start; padding-left: 1px; }
.share i { width: 5px; height: 14px; margin-left: auto; background: #eef; }
</style>
